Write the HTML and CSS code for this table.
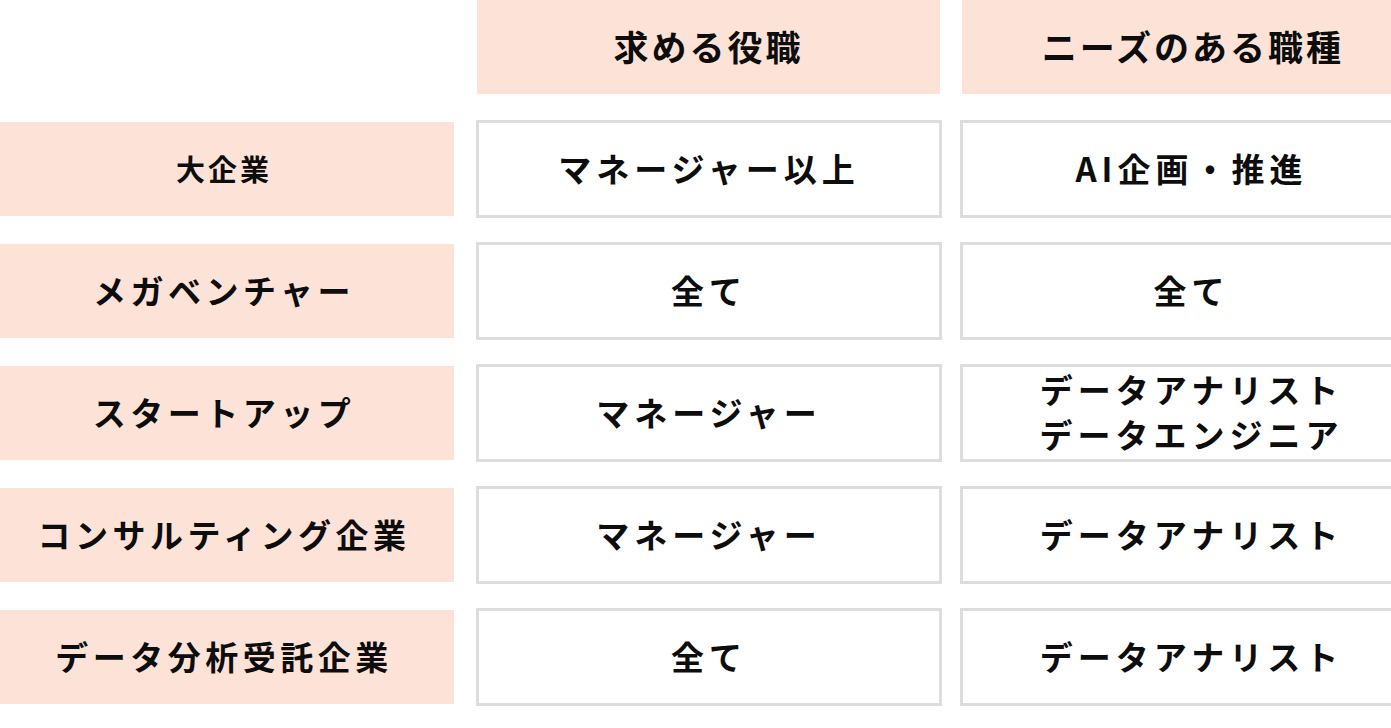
FILE: index.html
```html
<!DOCTYPE html>
<html lang="ja">
<head>
<meta charset="utf-8">
<link rel="stylesheet" href="styles.css">
</head>
<body>
<div class="table">
  <div class="row head-row">
    <div class="corner"></div>
    <div class="head head-1">求める役職</div>
    <div class="head head-2">ニーズのある職種</div>
  </div>
  <div class="row">
    <div class="label small">大企業</div>
    <div class="cell cell-1">マネージャー以上</div>
    <div class="cell cell-2">AI企画・推進</div>
  </div>
  <div class="row">
    <div class="label">メガベンチャー</div>
    <div class="cell cell-1">全て</div>
    <div class="cell cell-2">全て</div>
  </div>
  <div class="row">
    <div class="label">スタートアップ</div>
    <div class="cell cell-1">マネージャー</div>
    <div class="cell cell-2 two">データアナリスト<br>データエンジニア</div>
  </div>
  <div class="row">
    <div class="label">コンサルティング企業</div>
    <div class="cell cell-1">マネージャー</div>
    <div class="cell cell-2">データアナリスト</div>
  </div>
  <div class="row">
    <div class="label">データ分析受託企業</div>
    <div class="cell cell-1">全て</div>
    <div class="cell cell-2">データアナリスト</div>
  </div>
</div>
</body>
</html>
```
FILE: styles.css
```css
html, body {
  margin: 0;
  padding: 0;
  background: #ffffff;
  overflow: hidden;
}
body {
  width: 1391px;
  height: 728px;
  font-family: "Noto Sans CJK JP", "Noto Sans", sans-serif;
  font-weight: 700;
  color: #0d0d0d;
}
.table {
  display: flex;
  flex-direction: column;
  gap: 24px;
  width: 1391px;
}
.row {
  display: flex;
  align-items: center;
  height: 98px;
}
.head-row {
  height: 94px;
  margin-bottom: 2px;
}
.corner {
  width: 454px;
  flex: none;
  margin-right: 23px;
}
.head {
  flex: none;
  height: 94px;
  padding-bottom: 4px;
  box-sizing: border-box;
  background: #fde3d7;
  display: flex;
  align-items: center;
  justify-content: center;
  font-size: 35px;
  letter-spacing: 3px;
}
.head-1 {
  width: 463px;
  margin-right: 22px;
}
.head-2 {
  width: 429px;
  padding-left: 33px;
}
.label {
  flex: none;
  width: 454px;
  height: 94px;
  margin-right: 22px;
  padding-right: 6px;
  padding-bottom: 2px;
  box-sizing: border-box;
  background: #fde3d7;
  display: flex;
  align-items: center;
  justify-content: center;
  font-size: 33px;
  letter-spacing: 4.5px;
}
.label.small {
  font-size: 29px;
  letter-spacing: 3px;
}
.cell {
  flex: none;
  box-sizing: border-box;
  height: 98px;
  border: 3px solid #dddddd;
  padding-bottom: 3px;
  display: flex;
  align-items: center;
  justify-content: center;
  text-align: center;
  font-size: 33px;
  letter-spacing: 5px;
  background: #ffffff;
}
.cell-1 {
  width: 466px;
  margin-right: 18px;
}
.cell-2 {
  width: 431px;
  border-right: none;
  padding-left: 29px;
}
.two {
  line-height: 45px;
}
```
